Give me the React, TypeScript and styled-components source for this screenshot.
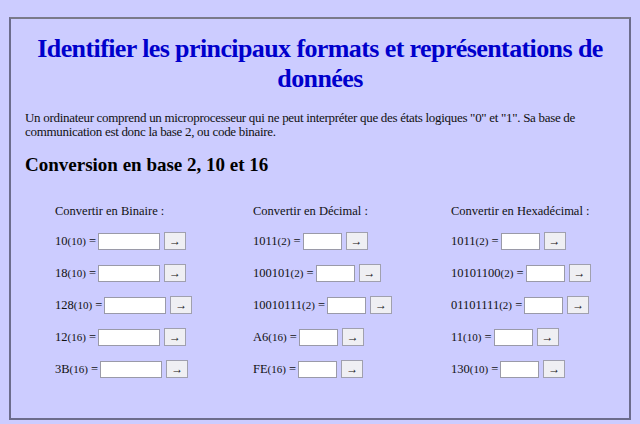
import styled, { createGlobalStyle } from "styled-components";

const GlobalStyle = createGlobalStyle`
    html, body {
        margin: 0;
        padding: 0;
        background-color: #ccccff;
        font-family: "Liberation Serif", "Times New Roman", serif;
    }
`

const StyledPage = styled.div`
    padding: 17px 9px 5px 9px;
`

const StyledBox = styled.main`
    border: 2px solid #6c6c8c;
    border-top-color: #7a7a8a;
    height: 403px;
    box-sizing: border-box;
    padding: 0 14px;
`

const StyledTitle = styled.h1`
    color: #0000cc;
    text-align: center;
    font-size: 26px;
    line-height: 30px;
    letter-spacing: -0.6px;
    margin: 15px 0 0 0;
`

const StyledP = styled.p`
    font-size: 13px;
    line-height: 14px;
    letter-spacing: -0.3px;
    color: #111;
    margin: 17px 0 0 0;
`

const StyledH2 = styled.h2`
    font-size: 19px;
    line-height: 22px;
    margin: 15px 0 0 0;
`

const StyledGrid = styled.div`
    display: grid;
    grid-template-columns: repeat(3, 198px);
    margin: 26px 0 0 30px;
`

const StyledColumn = styled.div`
    display: flex;
    flex-direction: column;
    gap: 14px;
    font-size: 12.5px;
    color: #111;
`

const StyledHeading = styled.div`
    line-height: 18px;
    margin-bottom: -2px;
`

const StyledRow = styled.div`
    display: flex;
    align-items: center;
    height: 18px;
`

const StyledBase = styled.span`
    font-size: 11px;
`

const StyledInput = styled.input<{ $wide?: boolean }>`
    width: ${(p) => (p.$wide ? "62px" : "39px")};
    height: 17px;
    box-sizing: border-box;
    border: 1px solid #9a9aa8;
    background: #fff;
    margin: 0 3px 0 2px;
    padding: 0;
`

const StyledButton = styled.button`
    width: 22px;
    height: 18px;
    box-sizing: border-box;
    border: 1px solid #a0a0ae;
    background: #efeff3;
    font-size: 12px;
    padding: 0;
    margin: 0 0 0 1px;
    color: #111;
`

type Item = { value: string; base: string };

const columns: { title: string; wide: boolean; items: Item[] }[] = [
    {
        title: "Convertir en Binaire :",
        wide: true,
        items: [
            { value: "10", base: "10" },
            { value: "18", base: "10" },
            { value: "128", base: "10" },
            { value: "12", base: "16" },
            { value: "3B", base: "16" },
        ],
    },
    {
        title: "Convertir en Décimal :",
        wide: false,
        items: [
            { value: "1011", base: "2" },
            { value: "100101", base: "2" },
            { value: "10010111", base: "2" },
            { value: "A6", base: "16" },
            { value: "FE", base: "16" },
        ],
    },
    {
        title: "Convertir en Hexadécimal :",
        wide: false,
        items: [
            { value: "1011", base: "2" },
            { value: "10101100", base: "2" },
            { value: "01101111", base: "2" },
            { value: "11", base: "10" },
            { value: "130", base: "10" },
        ],
    },
];

export default function App() {
    return (
        <StyledPage>
            <GlobalStyle />
            <StyledBox>
                <StyledTitle>Identifier les principaux formats et représentations de données</StyledTitle>
                <StyledP>
                    Un ordinateur comprend un microprocesseur qui ne peut interpréter que des états logiques "0" et "1".
                    Sa base de communication est donc la base 2, ou code binaire.
                </StyledP>
                <StyledH2>Conversion en base 2, 10 et 16</StyledH2>
                <StyledGrid>
                    {columns.map((col) => (
                        <StyledColumn key={col.title}>
                            <StyledHeading>{col.title}</StyledHeading>
                            {col.items.map((item, i) => (
                                <StyledRow key={i}>
                                    {item.value}
                                    <StyledBase>({item.base})</StyledBase>
                                    &nbsp;=
                                    <StyledInput type="text" $wide={col.wide} />
                                    <StyledButton>→</StyledButton>
                                </StyledRow>
                            ))}
                        </StyledColumn>
                    ))}
                </StyledGrid>
            </StyledBox>
        </StyledPage>
    );
}
